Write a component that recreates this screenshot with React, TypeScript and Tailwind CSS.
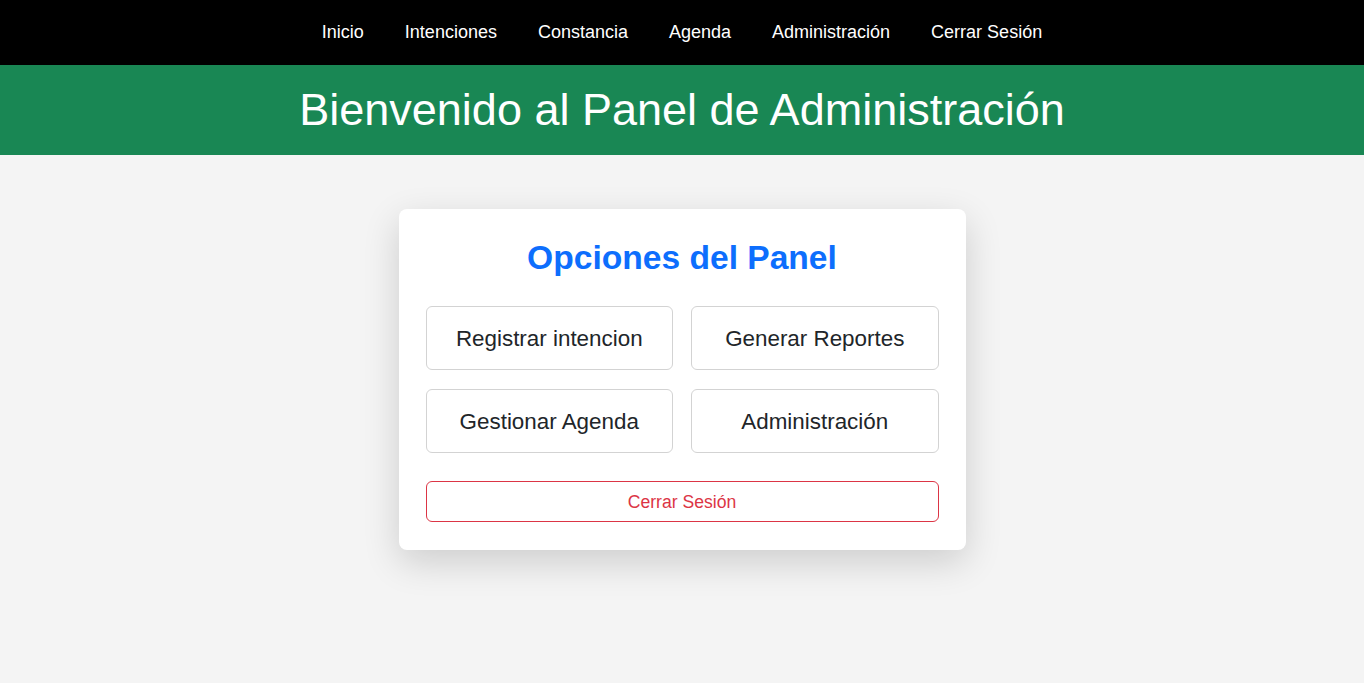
import React from "react";

const navLinks = [
  "Inicio",
  "Intenciones",
  "Constancia",
  "Agenda",
  "Administración",
  "Cerrar Sesión",
];

const options = [
  "Registrar intencion",
  "Generar Reportes",
  "Gestionar Agenda",
  "Administración",
];

export default function App() {
  return (
    <div
      className="min-h-[683px] bg-[#f4f4f4]"
      style={{ fontFamily: '"Liberation Sans", Arial, sans-serif' }}
    >
      {/* Top nav */}
      <nav className="h-[65px] bg-black flex items-center justify-center">
        <ul className="flex gap-[41px]">
          {navLinks.map((link) => (
            <li key={link}>
              <a href="#" className="text-white text-[18px] leading-none">
                {link}
              </a>
            </li>
          ))}
        </ul>
      </nav>

      {/* Header */}
      <header className="h-[90px] bg-[#198754] flex items-center justify-center">
        <h1 className="text-white text-[45px] leading-[1.2] font-normal">
          Bienvenido al Panel de Administración
        </h1>
      </header>

      {/* Panel card */}
      <div className="flex justify-center pt-[54px]">
        <div className="w-[567px] bg-white rounded-[8px] px-[27px] pt-[29px] pb-[28px] shadow-[0_12px_36px_rgba(0,0,0,0.16)]">
          <h2 className="text-[#0d6efd] text-[33.6px] font-bold leading-[40px] text-center mb-[28px]">
            Opciones del Panel
          </h2>

          <div className="grid grid-cols-2 gap-x-[18px] gap-y-[19px]">
            {options.map((opt) => (
              <button
                key={opt}
                className="h-[64px] pt-[2px] bg-white border border-[#d3d3d3] rounded-[6px] text-[#212529] text-[22.4px] flex items-center justify-center"
              >
                {opt}
              </button>
            ))}
          </div>

          <button className="mt-[28px] w-full h-[41px] pt-[1px] border border-[#dc3545] rounded-[6px] text-[#dc3545] text-[17.6px] flex items-center justify-center">
            Cerrar Sesión
          </button>
        </div>
      </div>
    </div>
  );
}
